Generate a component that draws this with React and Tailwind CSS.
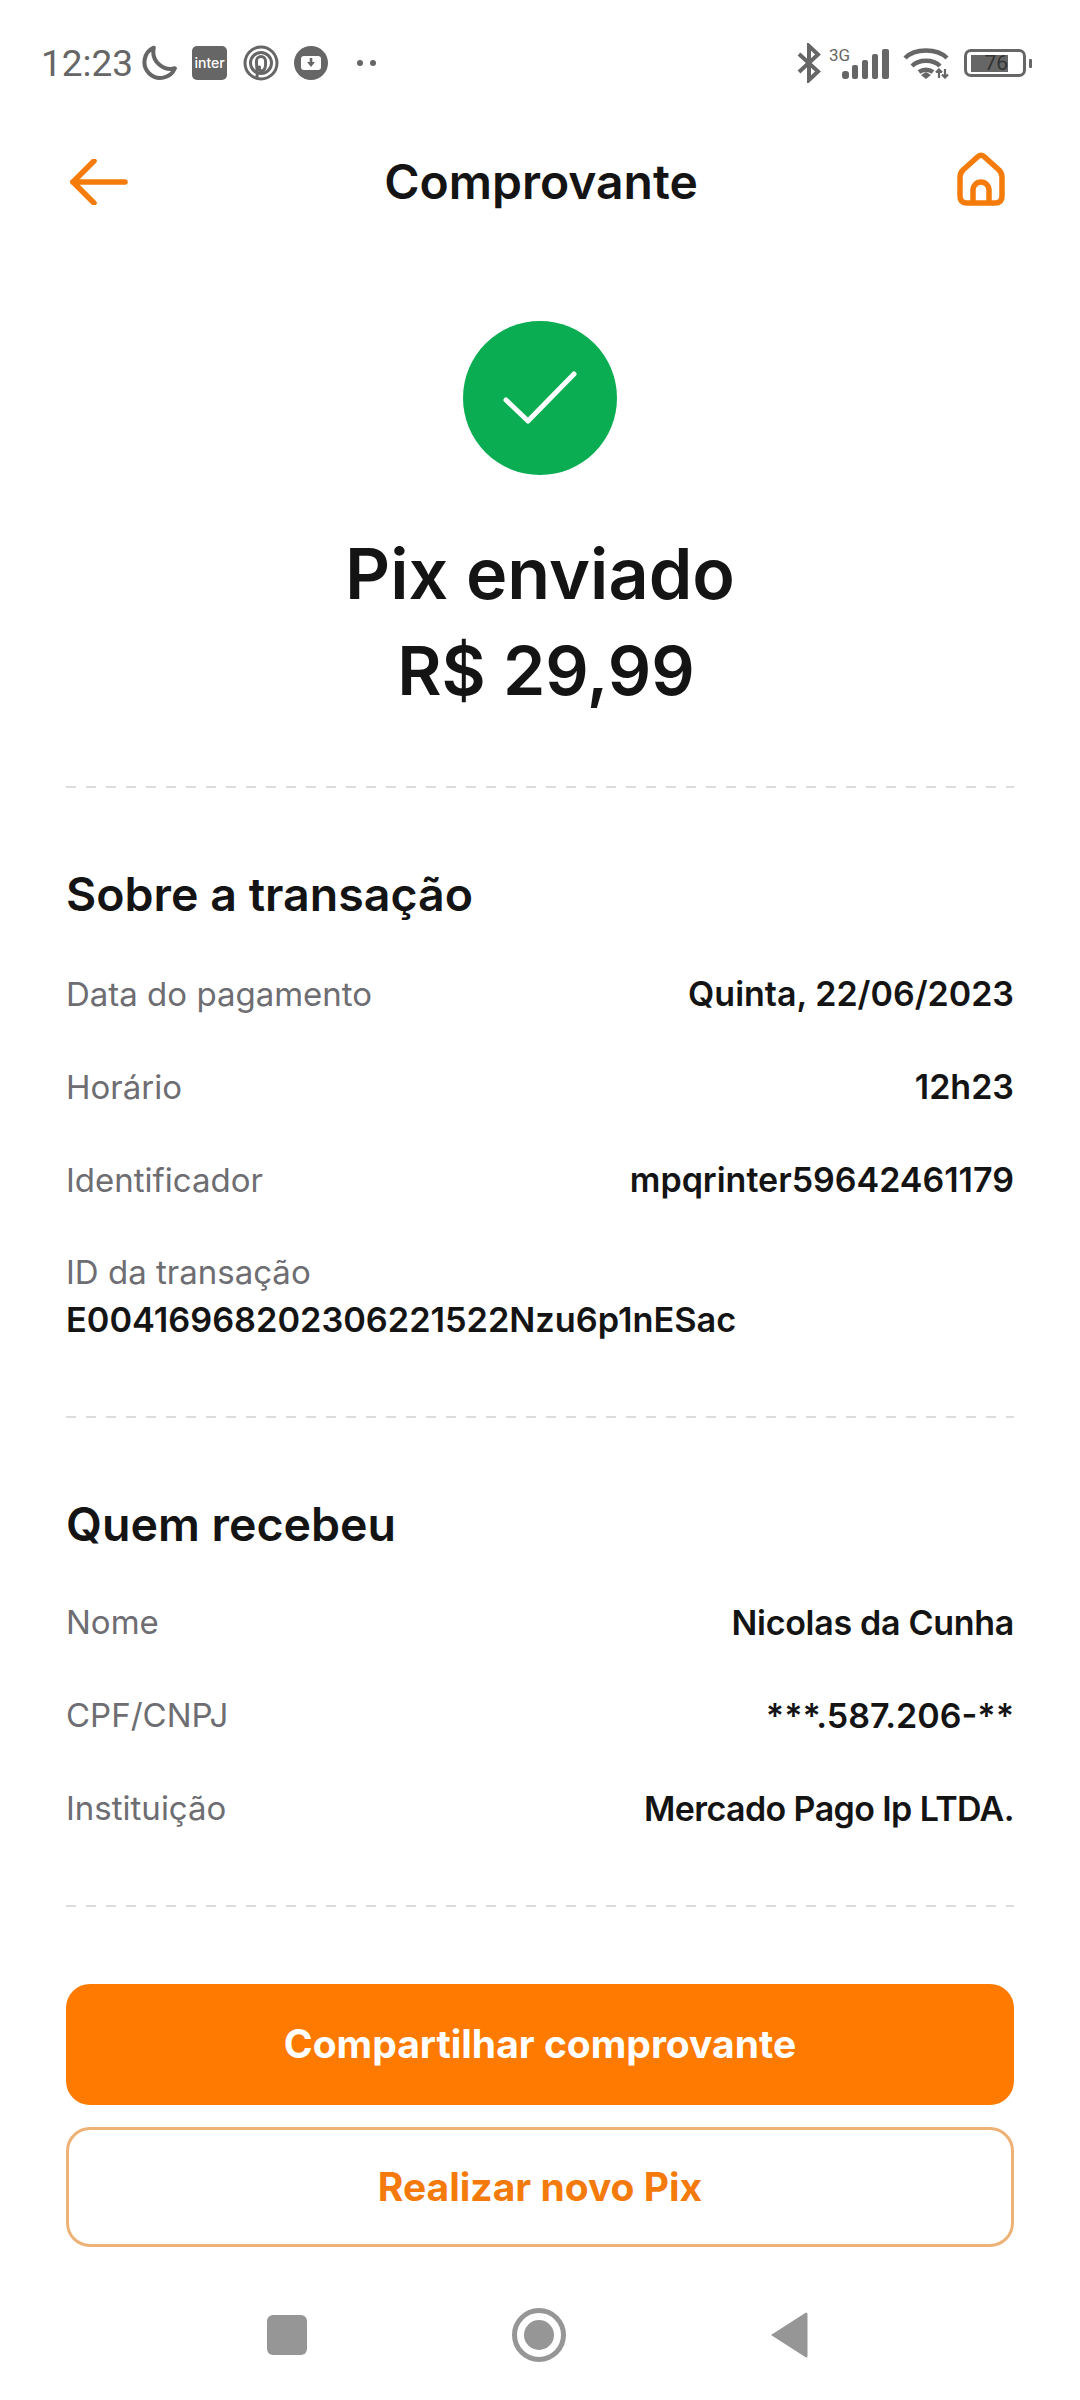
import React from 'react';

const Dashed = () => (
  <div className="h-[2px] bg-[repeating-linear-gradient(90deg,#dcdcdc_0,#dcdcdc_10px,transparent_10px,transparent_20px)]" />
);

const Row = ({ label, value, valueClass = '' }) => (
  <div className="flex h-[93px] items-center justify-between">
    <span className="text-[33px] leading-none text-[#6d6d72]">{label}</span>
    <span className={`text-[34px] leading-none font-semibold text-[#141414] ${valueClass}`}>{value}</span>
  </div>
);

const StatusLeft = () => (
  <div className="flex items-center">
    <span className="font-['Roboto',sans-serif] text-[37px] leading-none text-[#666666]">12:23</span>
    <svg width="38" height="36" viewBox="0 0 36 34" fill="none" className="ml-[6px]">
      <path d="M14 2.5 A15 15 0 1 0 34 22 C24 25 11 16 14 2.5Z" stroke="#666" strokeWidth="3.8" strokeLinejoin="round" />
    </svg>
    <div className="ml-[15px] flex h-[34px] w-[35px] items-center justify-center rounded-[5px] bg-[#666666] text-[14px] font-medium leading-none text-white">
      inter
    </div>
    <svg width="36" height="36" viewBox="0 0 36 36" fill="none" stroke="#666" strokeWidth="3" className="ml-[16px]">
      <circle cx="18" cy="18" r="16" />
      <circle cx="18" cy="18" r="10.5" />
      <path d="M14 33 C15 26 13 20 13.5 16 a4.5 4.5 0 0 1 9 0 C23 21 22 25 19 26 C16.5 26 16 24 16.5 22" strokeLinecap="round" />
    </svg>
    <svg width="34" height="34" viewBox="0 0 34 34" className="ml-[15px]">
      <circle cx="17" cy="17" r="17" fill="#666" />
      <rect x="7" y="10" width="20" height="14" rx="3" fill="#fff" />
      <path d="M15.7 12h2.6v4h2.7L17 21l-4-5h2.7z" fill="#666" />
    </svg>
    <div className="ml-[29px] flex gap-[7px]">
      <div className="h-[6px] w-[6px] rounded-full bg-[#666666]" />
      <div className="h-[6px] w-[6px] rounded-full bg-[#666666]" />
    </div>
  </div>
);

const StatusRight = () => (
  <div className="flex items-center">
    <svg width="24" height="40" viewBox="0 0 24 40" fill="none" stroke="#666" strokeWidth="4">
      <path d="M2 11 L21 28.5 L12 37 V3 L21 11.5 L2 29" />
    </svg>
    <div className="relative ml-[8px] h-[32px] w-[60px]">
      <span className="absolute left-0 top-0 font-['Roboto',sans-serif] text-[17px] leading-none text-[#666666]">3G</span>
      <svg width="47" height="30" viewBox="0 0 47 30" className="absolute bottom-0 right-0" fill="#666">
        <rect x="0" y="22" width="7" height="8" rx="3" />
        <rect x="10" y="16" width="6" height="14" rx="2" />
        <rect x="20" y="11" width="6" height="19" rx="2" />
        <rect x="30" y="5" width="6" height="25" rx="2" />
        <rect x="40" y="0" width="7" height="30" rx="2" />
      </svg>
    </div>
    <svg width="46" height="32" viewBox="0 0 46 32" fill="none" stroke="#666" strokeWidth="4.4" className="ml-[14px]">
      <path d="M2 11 C12 1 34 1 44 11" />
      <path d="M9 19 C16 12 30 12 37 19" />
      <path d="M16 25 C20 22 26 22 30 25" />
      <path d="M18 28 L23 25 L28 28 L23 32 Z" fill="#666" stroke="none" />
      <path d="M36 31 V23 M33 25.5 L36 22.5 L39 25.5 M42 22 V30 M39 27.5 L42 30.5 L45 27.5" strokeWidth="2.2" />
    </svg>
    <div className="ml-[15px] flex items-center">
      <div className="flex h-[28px] w-[62px] items-center rounded-[7px] border-[3px] border-[#666666] pl-[4px]">
        <div className="flex h-[17px] w-[37px] items-center justify-end bg-[#666666] font-['Roboto',sans-serif] text-[21px] leading-none text-[#333333]">
          76
        </div>
      </div>
      <div className="ml-[3px] h-[9px] w-[3px] rounded-[1px] bg-[#666666]" />
    </div>
  </div>
);

export default function App() {
  return (
    <div className="flex h-[2400px] w-[1080px] flex-col bg-white font-['Inter',sans-serif]">
      <div className="flex h-[126px] items-center justify-between pl-[41px] pr-[48px]">
        <StatusLeft />
        <StatusRight />
      </div>

      <header className="flex h-[112px] items-center justify-between pl-[70px] pr-[75px]">
        <svg width="58" height="46" viewBox="0 0 58 46" fill="none" stroke="#f57c0a" strokeWidth="5.5" strokeLinecap="round" strokeLinejoin="round">
          <path d="M55 23H3" />
          <path d="M24 2L3 23L24 44" />
        </svg>
        <h1 className="mr-[3px] text-[48px] font-semibold leading-none text-[#141414]">Comprovante</h1>
        <svg width="48" height="54" viewBox="0 0 48 54" fill="none" stroke="#f57c0a" strokeWidth="5.5" strokeLinejoin="round" className="mb-[6px]">
          <path d="M21 4.5 Q24 2 27 4.5 L42 18 Q45 21 45 25 V44 Q45 51 38 51 H10 Q3 51 3 44 V25 Q3 21 6 18 Z" />
          <path d="M16 51 V38 a8 8 0 0 1 16 0 V51" />
        </svg>
      </header>

      <div className="mt-[83px] flex flex-col items-center">
        <div className="flex h-[154px] w-[154px] items-center justify-center rounded-full bg-[#0bad52]">
          <svg width="74" height="54" viewBox="0 0 74 54" fill="none" stroke="#fff" strokeWidth="5" strokeLinecap="round" strokeLinejoin="round">
            <path d="M3 29 L25 50 L71 3" />
          </svg>
        </div>
        <div className="mt-[50px] text-[70px] font-semibold leading-[97px] text-[#141414]">Pix enviado</div>
        <div className="ml-[12px] text-[68px] font-semibold leading-[97px] text-[#141414]">R$ 29,99</div>
      </div>

      <div className="mt-[67px] px-[66px]">
        <Dashed />
        <h2 className="mt-[83px] text-[46.5px] font-semibold leading-none text-[#141414]">Sobre a transação</h2>
        <div className="mt-[30px]">
          <Row label="Data do pagamento" value="Quinta, 22/06/2023" />
          <Row label="Horário" value="12h23" />
          <Row label="Identificador" value="mpqrinter59642461179" />
        </div>
        <div className="mt-[21px] text-[33px] leading-[48px] text-[#6d6d72]">ID da transação</div>
        <div className="text-[34.3px] font-semibold leading-[48px] text-[#141414]">E00416968202306221522Nzu6p1nESac</div>
        <div className="mt-[72px]">
          <Dashed />
        </div>
        <h2 className="mt-[83px] text-[46.5px] font-semibold leading-none text-[#141414]">Quem recebeu</h2>
        <div className="mt-[29px]">
          <Row label="Nome" value="Nicolas da Cunha" valueClass="tracking-[-0.3px]" />
          <Row label="CPF/CNPJ" value="***.587.206-**" />
          <Row label="Instituição" value="Mercado Pago Ip LTDA." valueClass="tracking-[-0.6px]" />
        </div>
        <div className="mt-[50px]">
          <Dashed />
        </div>
        <button className="mt-[77px] flex h-[121px] w-full items-center justify-center rounded-[24px] bg-[#ff7a00] text-[39px] font-bold text-white">
          Compartilhar comprovante
        </button>
        <button className="mt-[22px] flex h-[120px] w-full items-center justify-center rounded-[24px] border-[3px] border-[#eeb277] text-[39px] font-bold text-[#f47a0c]">
          Realizar novo Pix
        </button>
      </div>

      <nav className="mt-[61px] flex items-center justify-between pl-[267px] pr-[272px]">
        <div className="h-[40px] w-[40px] rounded-[6px] bg-[#969696]" />
        <div className="flex h-[54px] w-[54px] items-center justify-center rounded-full border-[5px] border-[#969696]">
          <div className="h-[30px] w-[30px] rounded-full bg-[#969696]" />
        </div>
        <svg width="38" height="48" viewBox="0 0 38 48" fill="#969696">
          <path d="M36 1.5 a1.5 1.5 0 0 1 1.5 1.5 V45 a1.5 1.5 0 0 1 -1.5 1.5 L1 24 Z" />
        </svg>
      </nav>
    </div>
  );
}
